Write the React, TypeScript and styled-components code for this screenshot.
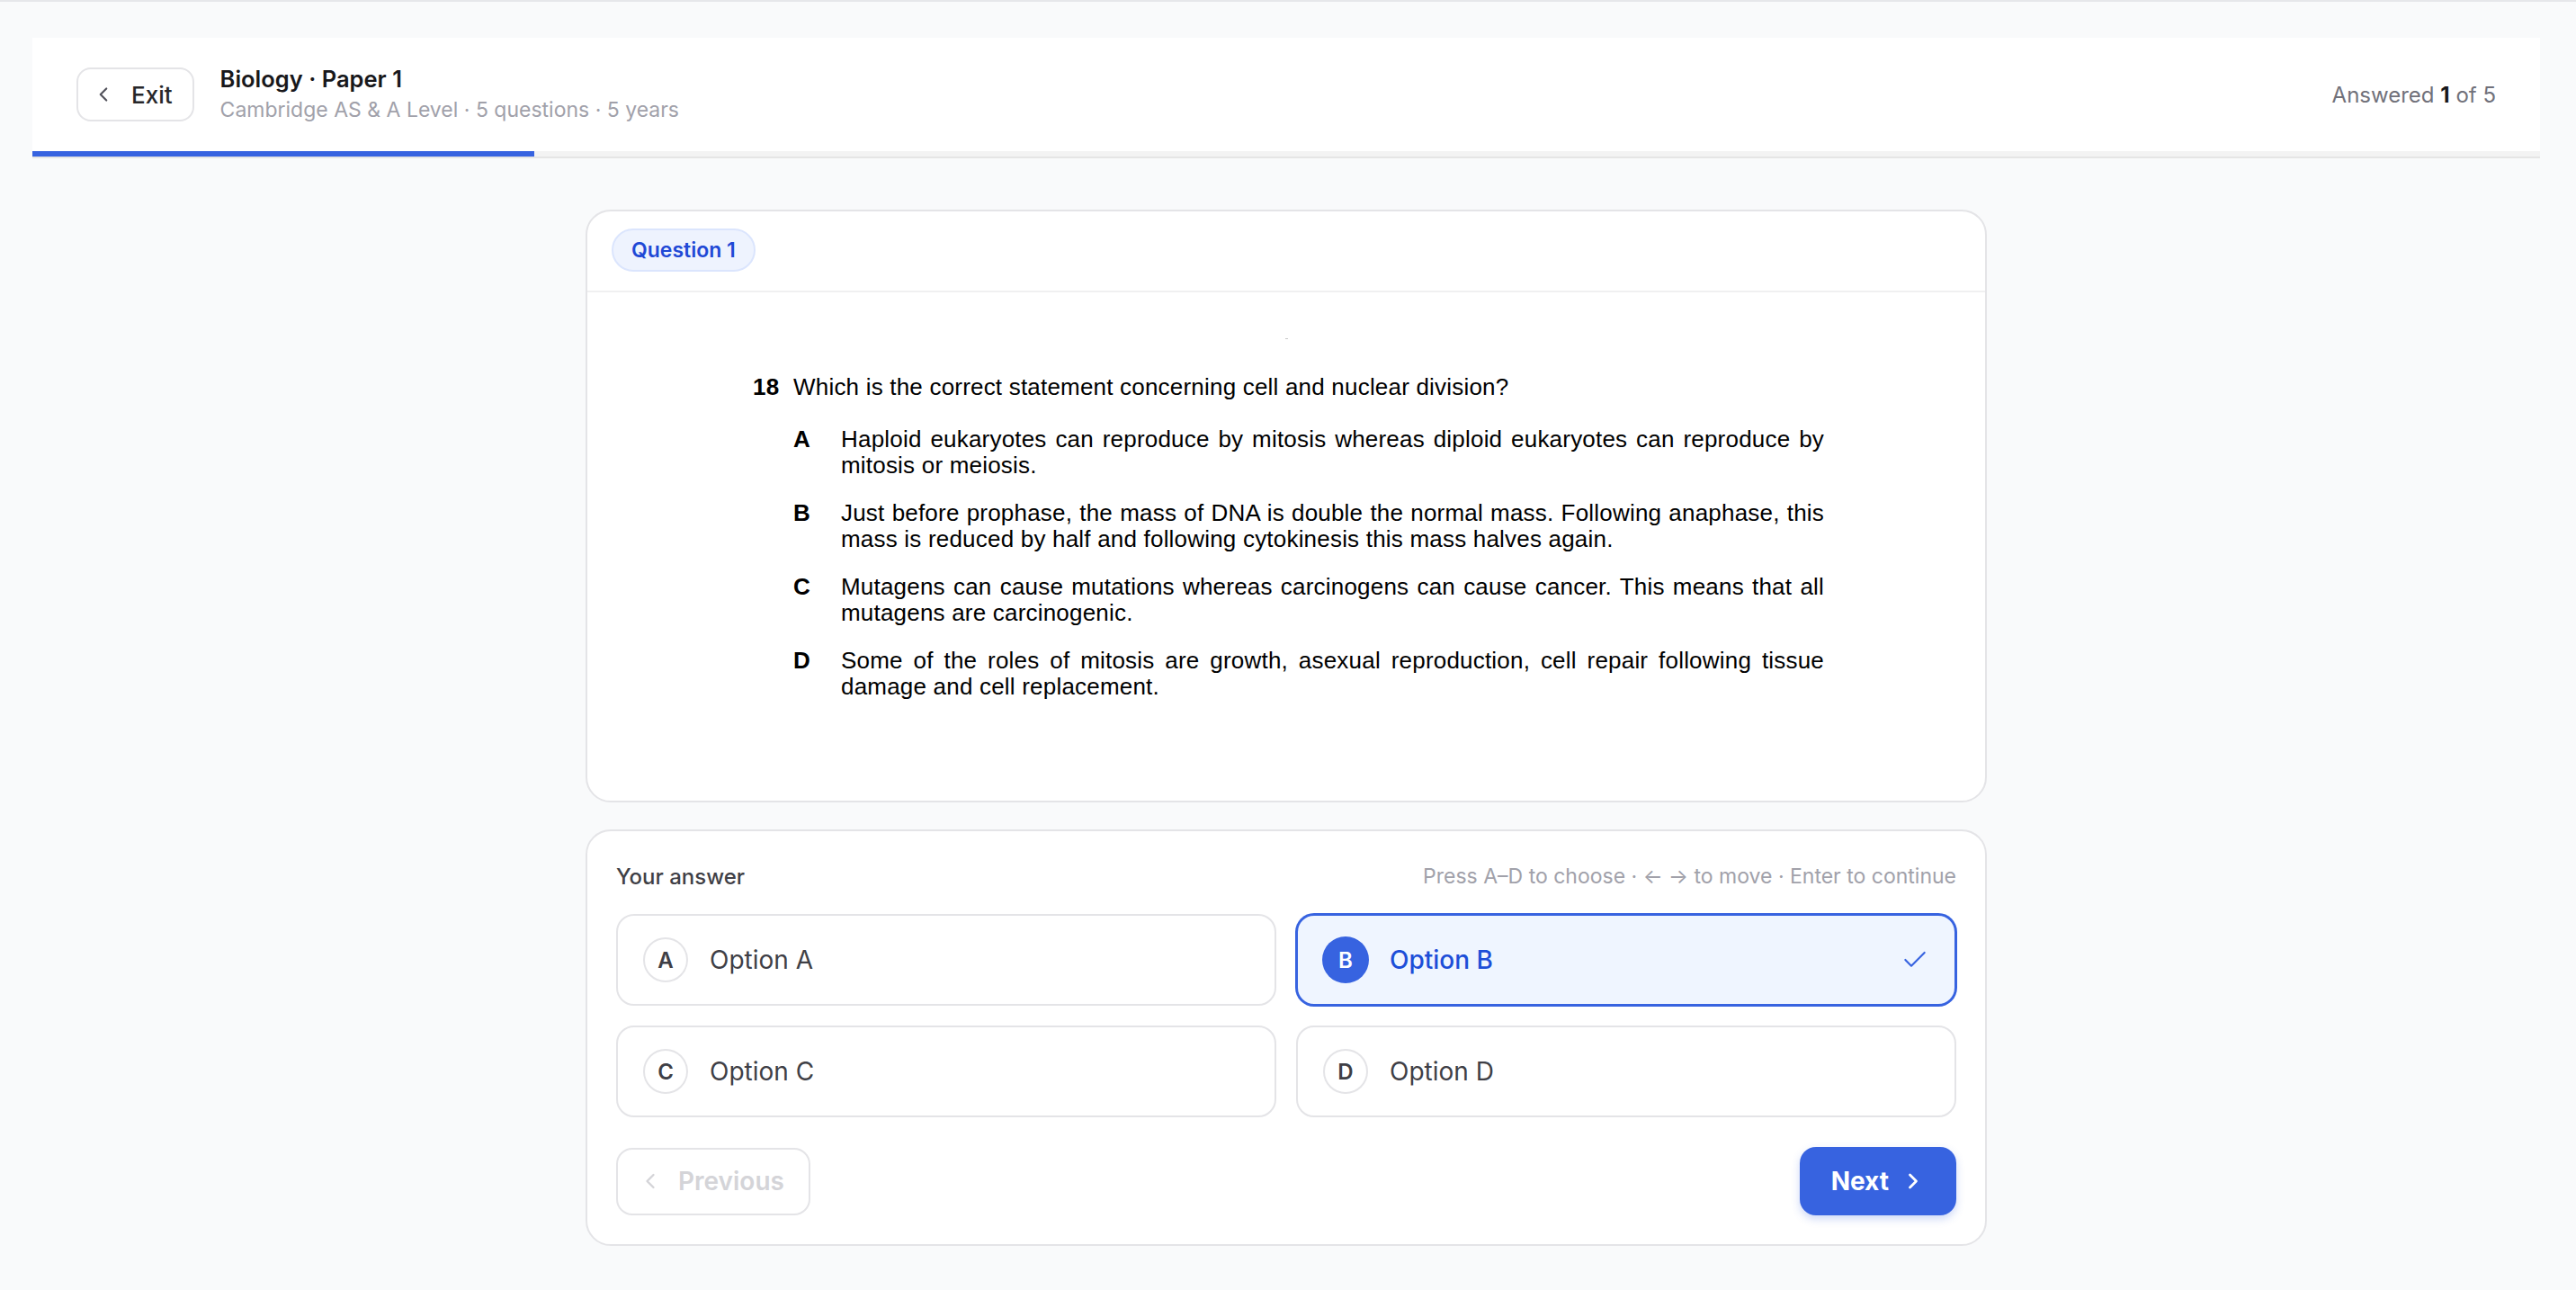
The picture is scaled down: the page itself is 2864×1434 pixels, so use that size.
import React from 'react';
import styled, { createGlobalStyle } from 'styled-components';
import { Check, ChevronLeft, ChevronRight } from 'lucide-react';

const GlobalStyle = createGlobalStyle`
  html, body {
    margin: 0;
    padding: 0;
    background: #f9fafb;
  }

  body {
    font-family: Inter, 'Noto Sans', sans-serif;
    color: #18181b;
    -webkit-font-smoothing: antialiased;
  }

  * {
    box-sizing: border-box;
  }
`;

const ACCENT = '#3763e0';

const Page = styled.div`
  min-height: 100vh;
  border-top: 2px solid #e6e7ea;
  padding: 40px 40px 60px 36px;
`;

const Header = styled.header`
  background: #ffffff;
`;

const HeaderRow = styled.div`
  height: 126px;
  padding: 0 49px;
  display: flex;
  align-items: center;
`;

const ExitButton = styled.button`
  height: 60px;
  padding: 0 22px 0 15px;
  display: flex;
  align-items: center;
  gap: 18px;
  border: 2px solid #e4e4e7;
  border-radius: 16px;
  background: #ffffff;
  color: #27272a;
  font-family: inherit;
  font-size: 26px;
  font-weight: 500;
  cursor: pointer;

  svg {
    color: #52525b;
  }
`;

const TitleBlock = styled.div`
  margin-left: 29px;
  display: flex;
  flex-direction: column;
`;

const Title = styled.div`
  font-size: 25.5px;
  font-weight: 600;
  line-height: 34px;
  color: #18181b;
`;

const Subtitle = styled.div`
  font-size: 23px;
  line-height: 35px;
  color: #a1a1aa;
`;

const Answered = styled.div`
  margin-left: auto;
  font-size: 24px;
  color: #71717a;

  b {
    color: #18181b;
    font-weight: 700;
  }
`;

const Track = styled.div`
  height: 8px;
  background: #f3f3f3;
  border-bottom: 2px solid #e5e5e5;
`;

const Fill = styled.div`
  height: 6px;
  background: ${ACCENT};
`;

const Main = styled.main`
  width: 1558px;
  margin: 57px auto 0;
  display: flex;
  flex-direction: column;
  gap: 30px;
`;

const Card = styled.section`
  background: #ffffff;
  border: 2px solid #e4e4e7;
  border-radius: 28px;
  overflow: hidden;
`;

const CardHeader = styled.div`
  padding: 19px 27px 21px;
  border-bottom: 2px solid #f0f0f1;
`;

const Badge = styled.span`
  height: 48px;
  padding: 0 20px;
  display: inline-flex;
  align-items: center;
  border: 2px solid #dbe5fd;
  border-radius: 999px;
  background: #eef3fe;
  color: #1f49d6;
  font-size: 23px;
  font-weight: 600;
`;

const QuestionBody = styled.div`
  padding: 51px 0 112px;
`;

const Speck = styled.div`
  width: 3px;
  height: 1px;
  margin: 0 auto;
  background: #c8c8c8;
`;

const Paper = styled.div`
  width: 1191px;
  margin: 39px 0 0 184px;
  font-family: 'Liberation Sans', Arial, sans-serif;
  font-size: 26px;
  line-height: 29px;
  letter-spacing: 0.2px;
  color: #000000;
`;

const Stem = styled.div`
  display: flex;
`;

const Num = styled.span`
  width: 45px;
  flex: none;
  font-weight: 700;
`;

const Choices = styled.div`
  margin-top: 29px;
  padding-left: 45px;
  display: flex;
  flex-direction: column;
  gap: 24px;
`;

const Choice = styled.div`
  display: flex;
`;

const ChoiceLetter = styled.span`
  width: 53px;
  flex: none;
  font-weight: 700;
`;

const ChoiceText = styled.div`
  flex: 1;
  min-width: 0;
`;

const Line = styled.div<{ $justify?: boolean }>`
  text-align: ${(p) => (p.$justify ? 'justify' : 'left')};
  text-align-last: ${(p) => (p.$justify ? 'justify' : 'left')};
`;

const AnswerCard = styled(Card)`
  padding: 32px;
`;

const AnswerHead = styled.div`
  height: 36px;
  display: flex;
  align-items: center;
  justify-content: space-between;
`;

const AnswerLabel = styled.div`
  font-size: 24px;
  font-weight: 500;
  color: #3f3f46;
`;

const Hint = styled.div`
  font-size: 23px;
  color: #a1a1aa;
`;

const OptionGrid = styled.div`
  margin-top: 24px;
  display: grid;
  grid-template-columns: 1fr 1fr;
  gap: 22px;
`;

const OptionButton = styled.button<{ $selected?: boolean }>`
  height: 102px;
  padding: 0 28px;
  display: flex;
  align-items: center;
  gap: 24px;
  border: 2px solid ${(p) => (p.$selected ? ACCENT : '#e4e4e7')};
  box-shadow: ${(p) => (p.$selected ? `0 0 0 1px ${ACCENT}` : 'none')};
  border-radius: 20px;
  background: ${(p) => (p.$selected ? '#eff5ff' : '#ffffff')};
  font-family: inherit;
  text-align: left;
  cursor: pointer;

  svg {
    margin-left: auto;
    color: ${ACCENT};
  }
`;

const LetterCircle = styled.span<{ $selected?: boolean }>`
  width: 50px;
  height: 50px;
  flex: none;
  display: flex;
  align-items: center;
  justify-content: center;
  border-radius: 50%;
  border: 2px solid ${(p) => (p.$selected ? ACCENT : '#e4e4e7')};
  box-shadow: ${(p) => (p.$selected ? `0 0 0 1px ${ACCENT}` : 'none')};
  background: ${(p) => (p.$selected ? ACCENT : '#ffffff')};
  color: ${(p) => (p.$selected ? '#ffffff' : '#3f3f46')};
  font-size: 24px;
  font-weight: 600;
`;

const OptionLabel = styled.span<{ $selected?: boolean }>`
  font-size: 28px;
  font-weight: ${(p) => (p.$selected ? 500 : 400)};
  color: ${(p) => (p.$selected ? '#1d4ed8' : '#3f3f46')};
`;

const Nav = styled.div`
  margin-top: 33px;
  display: flex;
  justify-content: space-between;
  align-items: center;
`;

const PrevButton = styled.button`
  height: 75px;
  padding: 0 27px 0 22px;
  display: flex;
  align-items: center;
  gap: 17px;
  border: 2px solid #e4e4e7;
  border-radius: 18px;
  background: #ffffff;
  color: #d4d4d8;
  font-family: inherit;
  font-size: 28px;
  font-weight: 600;
  cursor: not-allowed;
`;

const NextButton = styled.button`
  height: 76px;
  padding: 0 34px 0 35px;
  display: flex;
  align-items: center;
  gap: 13px;
  border: none;
  border-radius: 18px;
  background: ${ACCENT};
  box-shadow: 0 4px 10px rgba(55, 99, 224, 0.25);
  color: #ffffff;
  font-family: inherit;
  font-size: 28px;
  font-weight: 700;
  cursor: pointer;
`;

const choices = [
  {
    letter: 'A',
    lines: [
      'Haploid eukaryotes can reproduce by mitosis whereas diploid eukaryotes can reproduce by',
      'mitosis or meiosis.'
    ]
  },
  {
    letter: 'B',
    lines: [
      'Just before prophase, the mass of DNA is double the normal mass. Following anaphase, this',
      'mass is reduced by half and following cytokinesis this mass halves again.'
    ]
  },
  {
    letter: 'C',
    lines: [
      'Mutagens can cause mutations whereas carcinogens can cause cancer. This means that all',
      'mutagens are carcinogenic.'
    ]
  },
  {
    letter: 'D',
    lines: [
      'Some of the roles of mitosis are growth, asexual reproduction, cell repair following tissue',
      'damage and cell replacement.'
    ]
  }
];

const options = ['A', 'B', 'C', 'D'];

export default function App() {
  const selected = 'B';
  const answered = 1;
  const total = 5;

  return (
    <>
      <GlobalStyle />
      <Page>
        <Header>
          <HeaderRow>
            <ExitButton>
              <ChevronLeft size={26} strokeWidth={2} />
              Exit
            </ExitButton>
            <TitleBlock>
              <Title>Biology · Paper 1</Title>
              <Subtitle>Cambridge AS &amp; A Level · 5 questions · 5 years</Subtitle>
            </TitleBlock>
            <Answered>
              Answered <b>{answered}</b> of {total}
            </Answered>
          </HeaderRow>
          <Track>
            <Fill style={{ width: `${(answered / total) * 100}%` }} />
          </Track>
        </Header>

        <Main>
          <Card>
            <CardHeader>
              <Badge>Question 1</Badge>
            </CardHeader>
            <QuestionBody>
              <Speck />
              <Paper>
                <Stem>
                  <Num>18</Num>
                  <span>Which is the correct statement concerning cell and nuclear division?</span>
                </Stem>
                <Choices>
                  {choices.map((c) => (
                    <Choice key={c.letter}>
                      <ChoiceLetter>{c.letter}</ChoiceLetter>
                      <ChoiceText>
                        {c.lines.map((line, i) => (
                          <Line key={i} $justify={i < c.lines.length - 1}>
                            {line}
                          </Line>
                        ))}
                      </ChoiceText>
                    </Choice>
                  ))}
                </Choices>
              </Paper>
            </QuestionBody>
          </Card>

          <AnswerCard>
            <AnswerHead>
              <AnswerLabel>Your answer</AnswerLabel>
              <Hint>Press A–D to choose · ← → to move · Enter to continue</Hint>
            </AnswerHead>
            <OptionGrid>
              {options.map((o) => {
                const isSel = o === selected;
                return (
                  <OptionButton key={o} $selected={isSel}>
                    <LetterCircle $selected={isSel}>{o}</LetterCircle>
                    <OptionLabel $selected={isSel}>Option {o}</OptionLabel>
                    {isSel && <Check size={32} strokeWidth={1.6} />}
                  </OptionButton>
                );
              })}
            </OptionGrid>
            <Nav>
              <PrevButton disabled>
                <ChevronLeft size={28} strokeWidth={2} />
                Previous
              </PrevButton>
              <NextButton>
                Next
                <ChevronRight size={28} strokeWidth={2.4} />
              </NextButton>
            </Nav>
          </AnswerCard>
        </Main>
      </Page>
    </>
  );
}
